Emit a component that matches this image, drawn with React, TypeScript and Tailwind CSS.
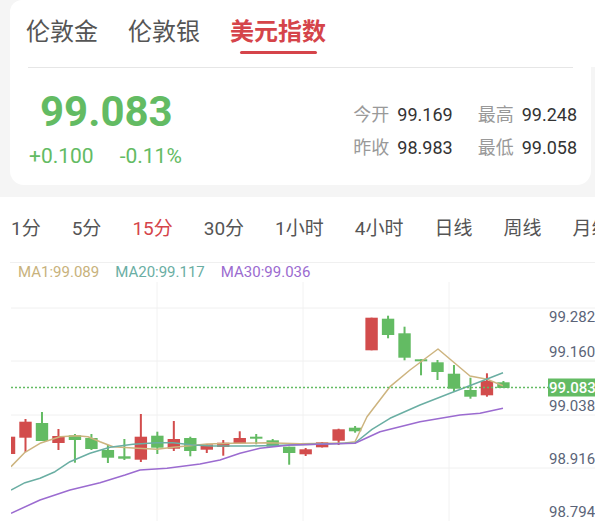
import React from 'react'

const RED = '#d24c4c'
const GREEN = '#63bb63'

// i, up?, bodyTop, bodyBottom, wickTop, wickBottom
const candles: [number, boolean, number, number, number, number][] = [
  [1, false, 436.7, 454, 436.7, 454],
  [2, false, 421.7, 437.7, 419, 452],
  [3, true, 423, 441, 412, 441],
  [4, false, 436, 443, 429, 450],
  [5, true, 435.3, 440, 434, 462.7],
  [6, true, 438, 449, 434, 450],
  [7, true, 450, 457.7, 445, 463],
  [8, true, 456.3, 458.7, 439, 460],
  [9, false, 436.7, 459.7, 414, 462],
  [10, true, 435.7, 447.7, 431.7, 454],
  [11, false, 439, 448.7, 421, 451],
  [12, true, 438, 451, 436.7, 456.3],
  [13, false, 444.3, 449.7, 444, 453],
  [14, false, 442.7, 447, 440, 455.7],
  [15, false, 438, 443.3, 431.3, 443.3],
  [16, true, 436.7, 438.7, 434, 444.3],
  [17, true, 440.3, 446.7, 439, 446.7],
  [18, true, 446.7, 453, 446.7, 464.7],
  [19, false, 449.3, 454.3, 448, 456],
  [20, false, 442.3, 447.3, 442, 447.5],
  [21, false, 429.3, 440.7, 428.7, 445],
  [22, true, 427.7, 431.3, 426, 432.7],
  [23, false, 317.7, 350.3, 317.7, 350.3],
  [24, true, 318.7, 335, 315.7, 338.3],
  [25, true, 333.3, 357.7, 326.7, 360.3],
  [26, true, 359.3, 361.3, 359.3, 375.3],
  [27, true, 362.3, 372, 360, 380],
  [28, true, 373.7, 388.7, 365, 391.7],
  [29, true, 390, 396.7, 377.7, 398.7],
  [30, false, 381, 395.3, 373.3, 396.7],
  [31, true, 382.3, 388, 381, 388],
]

const ma1 =
  '11,466.7 25,452.3 40,443.3 60,436.7 76.7,435.7 88,436.7 100,441.7 113,446.7 133,448 157,449.3 173,447.3 187,446 207,444 233,443.3 267,442.7 300,443.7 345,443 355,441.7 367,416.7 390,386.7 410,370 438,349 470,376 487,379.3 503,385.7'
const ma20 =
  '11,490 25,482.7 40,478.3 55,471.7 70,461.7 90,453.3 110,447.3 133,444.3 157,442.7 173,442.7 193,445 213,446 250,446 300,444.7 355,443 372,429.3 390,418.3 420,405 450,393.3 480,381.7 503,372.7'
const ma30 =
  '11,513.3 40,500 70,490 100,482.7 125,475 140,470 167,468.3 200,464 220,460 240,453.3 260,448.3 290,445 300,444.7 355,443.3 380,431.7 420,421.7 460,415 480,413.3 503,408.3'

function Chart() {
  return (
    <svg width={595} height={239} viewBox="0 282 595 239" className="block">
      <defs>
        <clipPath id="plot">
          <rect x={11} y={282} width={537} height={239} />
        </clipPath>
      </defs>
      {[157, 303, 449].map((x) => (
        <line key={x} x1={x} x2={x} y1={282} y2={521} stroke="#f2f2f2" strokeWidth={1} />
      ))}
      {[308, 361, 415, 468].map((y) => (
        <line key={y} x1={11} x2={595} y1={y} y2={y} stroke="#f0f0f0" strokeWidth={1} />
      ))}
      <g clipPath="url(#plot)">
        {candles.map(([i, up, bt, bb, wt, wb]) => {
          const cx = 25.5 + (i - 2) * 16.48
          const c = up ? GREEN : RED
          return (
            <g key={i}>
              <rect x={cx - 1} y={wt} width={2} height={wb - wt} fill={c} />
              <rect x={cx - 6.2} y={bt} width={12.4} height={Math.max(bb - bt, 2)} fill={c} />
            </g>
          )
        })}
        <polyline points={ma1} fill="none" stroke="#cdb47f" strokeWidth={1.5} strokeLinejoin="round" />
        <polyline points={ma20} fill="none" stroke="#6aaea3" strokeWidth={1.5} strokeLinejoin="round" />
        <polyline points={ma30} fill="none" stroke="#9b6bd0" strokeWidth={1.5} strokeLinejoin="round" />
      </g>
      <line x1={11} x2={548} y1={387.5} y2={387.5} stroke={GREEN} strokeWidth={1.5} strokeDasharray="2 2" />
      <rect x={548} y={378.5} width={47} height={18} fill={GREEN} />
      <g fontFamily="Roboto, sans-serif" fontSize={15}>
        <text x={549} y={388} dominantBaseline="central" fill="#fff" fontWeight={500}>
          99.083
        </text>
        {[
          ['99.282', 317],
          ['99.160', 352],
          ['99.038', 406],
          ['98.916', 459],
          ['98.794', 512],
        ].map(([t, y]) => (
          <text key={t} x={549} y={y} dominantBaseline="central" fill="#5b6478">
            {t}
          </text>
        ))}
      </g>
    </svg>
  )
}

export default function App() {
  const periods = ['1分', '5分', '15分', '30分', '1小时', '4小时', '日线', '周线', '月线']

  return (
    <div
      className="w-[595px] h-[521px] overflow-hidden bg-[#f5f5f5]"
      style={{ fontFamily: 'Roboto, "Noto Sans CJK SC", sans-serif' }}
    >
      {/* market tabs */}
      <div className="ml-[10px] h-[67px] bg-white rounded-tl-[12px] flex gap-[30px] pl-[16px] pt-[20px]">
        <div className="text-[24px] leading-[24px] text-[#555]">伦敦金</div>
        <div className="text-[24px] leading-[24px] text-[#555]">伦敦银</div>
        <div className="flex flex-col items-center">
          <div className="text-[24px] leading-[24px] font-bold text-[#d5444a]">美元指数</div>
          <div className="mt-[7px] w-[77px] h-[3px] rounded-full bg-[#d5444a]" />
        </div>
      </div>

      {/* quote card */}
      <div className="ml-[10px] mr-[4px] bg-white rounded-b-[14px] h-[118px]">
        <div className="mx-[18px] h-px bg-[#e6e6e6]" />
        <div className="flex justify-between">
          <div className="pl-[30px] pt-[23px] text-[#63bb63]">
            <div className="text-[42px] leading-[42px] font-bold">99.083</div>
            <div className="mt-[13px] -ml-[11px] flex gap-[26px] text-[21px] leading-[21px]">
              <span>+0.100</span>
              <span>-0.11%</span>
            </div>
          </div>
          <div className="pr-[14px] pt-[34px] grid grid-cols-[auto_auto] gap-x-[25px] text-[18px] leading-[25px]">
            <div className="flex gap-[8px]">
              <span className="text-[#999]">今开</span>
              <span className="text-[#333]">99.169</span>
            </div>
            <div className="flex gap-[8px]">
              <span className="text-[#999]">最高</span>
              <span className="text-[#333]">99.248</span>
            </div>
            <div className="flex gap-[8px]">
              <span className="text-[#999]">昨收</span>
              <span className="text-[#333]">98.983</span>
            </div>
            <div className="flex gap-[8px]">
              <span className="text-[#999]">最低</span>
              <span className="text-[#333]">99.058</span>
            </div>
          </div>
        </div>
      </div>

      {/* chart section */}
      <div className="mt-[12px] bg-white h-[324px]">
        <div className="h-[65px] pb-[3px] pl-[11px] flex items-center gap-[31px] whitespace-nowrap text-[19px] leading-[19px]">
          {periods.map((p) => (
            <span key={p} className={p === '15分' ? 'text-[#d5444a]' : 'text-[#555]'}>
              {p}
            </span>
          ))}
        </div>
        <div className="ml-[10px] h-px bg-[#f0f0f0]" />
        <div className="h-[19px] pl-[18px] flex items-center gap-[16px] text-[15px] leading-[19px]">
          <span className="text-[#c8b27c]">MA1:99.089</span>
          <span className="text-[#6aaea3]">MA20:99.117</span>
          <span className="text-[#9b6bd0]">MA30:99.036</span>
        </div>
        <Chart />
      </div>
    </div>
  )
}
